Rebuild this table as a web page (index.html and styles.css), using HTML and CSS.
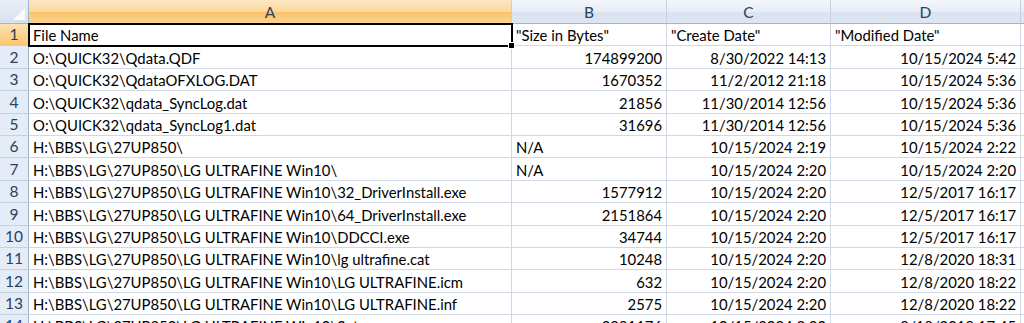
FILE: index.html
```html
<!DOCTYPE html>
<html>
<head>
<meta charset="utf-8">
<link rel="stylesheet" href="styles.css">
</head>
<body>
<div class="sheet">
  <div class="corner"><span class="tri"></span></div>
  <div class="colhead sel">A</div>
  <div class="colhead">B</div>
  <div class="colhead">C</div>
  <div class="colhead">D</div>
  <div class="colhead last"></div>

  <div class="rowhead sel">1</div>
  <div class="cell active">File Name<span class="handle"></span></div>
  <div class="cell">"Size in Bytes"</div>
  <div class="cell">"Create Date"</div>
  <div class="cell">"Modified Date"</div>
  <div class="cell"></div>

  <div class="rowhead">2</div>
  <div class="cell">O:\QUICK32\Qdata.QDF</div>
  <div class="cell num">174899200</div>
  <div class="cell num">8/30/2022 14:13</div>
  <div class="cell num">10/15/2024 5:42</div>
  <div class="cell"></div>

  <div class="rowhead">3</div>
  <div class="cell">O:\QUICK32\QdataOFXLOG.DAT</div>
  <div class="cell num">1670352</div>
  <div class="cell num">11/2/2012 21:18</div>
  <div class="cell num">10/15/2024 5:36</div>
  <div class="cell"></div>

  <div class="rowhead">4</div>
  <div class="cell">O:\QUICK32\qdata_SyncLog.dat</div>
  <div class="cell num">21856</div>
  <div class="cell num">11/30/2014 12:56</div>
  <div class="cell num">10/15/2024 5:36</div>
  <div class="cell"></div>

  <div class="rowhead">5</div>
  <div class="cell">O:\QUICK32\qdata_SyncLog1.dat</div>
  <div class="cell num">31696</div>
  <div class="cell num">11/30/2014 12:56</div>
  <div class="cell num">10/15/2024 5:36</div>
  <div class="cell"></div>

  <div class="rowhead">6</div>
  <div class="cell">H:\BBS\LG\27UP850\</div>
  <div class="cell">N/A</div>
  <div class="cell num">10/15/2024 2:19</div>
  <div class="cell num">10/15/2024 2:22</div>
  <div class="cell"></div>

  <div class="rowhead">7</div>
  <div class="cell">H:\BBS\LG\27UP850\LG ULTRAFINE Win10\</div>
  <div class="cell">N/A</div>
  <div class="cell num">10/15/2024 2:20</div>
  <div class="cell num">10/15/2024 2:20</div>
  <div class="cell"></div>

  <div class="rowhead">8</div>
  <div class="cell">H:\BBS\LG\27UP850\LG ULTRAFINE Win10\32_DriverInstall.exe</div>
  <div class="cell num">1577912</div>
  <div class="cell num">10/15/2024 2:20</div>
  <div class="cell num">12/5/2017 16:17</div>
  <div class="cell"></div>

  <div class="rowhead">9</div>
  <div class="cell">H:\BBS\LG\27UP850\LG ULTRAFINE Win10\64_DriverInstall.exe</div>
  <div class="cell num">2151864</div>
  <div class="cell num">10/15/2024 2:20</div>
  <div class="cell num">12/5/2017 16:17</div>
  <div class="cell"></div>

  <div class="rowhead">10</div>
  <div class="cell">H:\BBS\LG\27UP850\LG ULTRAFINE Win10\DDCCI.exe</div>
  <div class="cell num">34744</div>
  <div class="cell num">10/15/2024 2:20</div>
  <div class="cell num">12/5/2017 16:17</div>
  <div class="cell"></div>

  <div class="rowhead">11</div>
  <div class="cell">H:\BBS\LG\27UP850\LG ULTRAFINE Win10\lg ultrafine.cat</div>
  <div class="cell num">10248</div>
  <div class="cell num">10/15/2024 2:20</div>
  <div class="cell num">12/8/2020 18:31</div>
  <div class="cell"></div>

  <div class="rowhead">12</div>
  <div class="cell">H:\BBS\LG\27UP850\LG ULTRAFINE Win10\LG ULTRAFINE.icm</div>
  <div class="cell num">632</div>
  <div class="cell num">10/15/2024 2:20</div>
  <div class="cell num">12/8/2020 18:22</div>
  <div class="cell"></div>

  <div class="rowhead">13</div>
  <div class="cell">H:\BBS\LG\27UP850\LG ULTRAFINE Win10\LG ULTRAFINE.inf</div>
  <div class="cell num">2575</div>
  <div class="cell num">10/15/2024 2:20</div>
  <div class="cell num">12/8/2020 18:22</div>
  <div class="cell"></div>

  <div class="rowhead">14</div>
  <div class="cell">H:\BBS\LG\27UP850\LG ULTRAFINE Win10\Setup.exe</div>
  <div class="cell num">3991176</div>
  <div class="cell num">10/15/2024 2:20</div>
  <div class="cell num">9/18/2019 17:45</div>
  <div class="cell"></div>
</div>
</body>
</html>
```
FILE: styles.css
```css
html, body {
  margin: 0;
  padding: 0;
  background: #ffffff;
  overflow: hidden;
}
.sheet {
  display: grid;
  grid-template-columns: 29px 483px 155px 164px 190px 1fr;
  grid-template-rows: 24px repeat(14, 22.4px);
  font-family: Lato, "Liberation Sans", sans-serif;
  font-size: 14.85px;
  color: #000;
}
.corner {
  position: relative;
  background: linear-gradient(#e9eff8, #d6e0ee);
  border-right: 1px solid #9eb6ce;
  border-bottom: 1px solid #9eb6ce;
}
.tri {
  position: absolute;
  right: 3px;
  bottom: 3px;
  width: 0;
  height: 0;
  border-left: 12px solid transparent;
  border-bottom: 12px solid #ffffff;
  opacity: 0.85;
}
.colhead {
  background: linear-gradient(#f3f6fb 0%, #e7edf6 50%, #dae3ef 51%, #dde6f2 100%);
  border-right: 1px solid #c4d0df;
  border-bottom: 1px solid #9eb6ce;
  display: flex;
  align-items: center;
  justify-content: center;
  color: #27415f;
  font-size: 15.5px;
}
.colhead.sel {
  background: linear-gradient(#fde7c3 0%, #fbd89c 50%, #f9c36b 51%, #fbd28c 100%);
  border-bottom: 1px solid #f29436;
  color: #2f3f58;
}
.colhead.last {
  border-right: none;
}
.rowhead {
  background: #e4ecf7;
  border-right: 1px solid #9eb6ce;
  border-bottom: 1px solid #c5d2e3;
  display: flex;
  align-items: flex-end;
  justify-content: center;
  padding-bottom: 2px;
  box-sizing: border-box;
  color: #27415f;
  font-size: 15.5px;
}
.rowhead.sel {
  background: linear-gradient(#fde2b3, #f9c771);
  border-right: 1px solid #f29436;
}
.cell {
  border-right: 1px solid #d0d7e5;
  border-bottom: 1px solid #d0d7e5;
  padding: 0 4px 1px 4px;
  box-sizing: border-box;
  white-space: nowrap;
  overflow: hidden;
  display: flex;
  align-items: flex-end;
}
.cell.num {
  justify-content: flex-end;
}
.cell.active {
  position: relative;
  overflow: visible;
  outline: 2px solid #000;
  outline-offset: -1px;
  z-index: 2;
}
.handle {
  position: absolute;
  right: -4px;
  bottom: -4px;
  width: 5px;
  height: 5px;
  background: #000;
  border: 1px solid #fff;
}
```
